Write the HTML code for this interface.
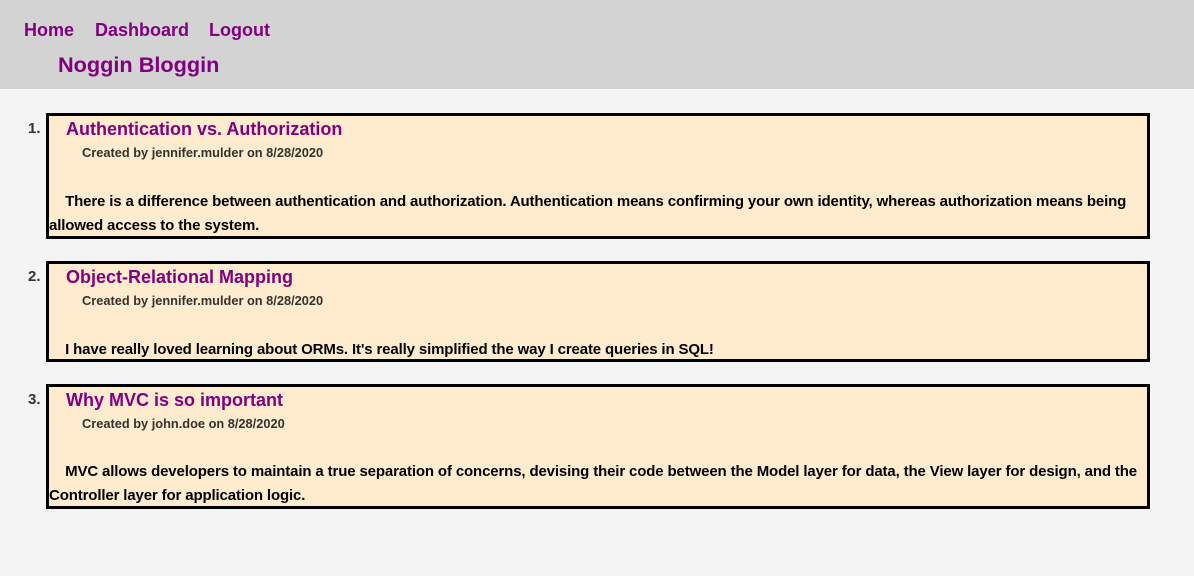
<!DOCTYPE html>
<html><head><meta charset="utf-8"><style>
*{margin:0;padding:0;box-sizing:border-box}
body{width:1194px;height:576px;background:#f4f4f4;font-family:"Liberation Sans",Arial,sans-serif;font-weight:bold;position:relative;overflow:hidden}
header{position:absolute;left:0;top:0;width:1194px;height:89px;background:#d3d3d3}
.nav{position:absolute;top:20px;font-size:18px;color:#800080}
.brand{position:absolute;left:58px;top:52px;font-size:21.7px;color:#800080}
.num{position:absolute;left:28px;font-size:15px;color:#333}
.box{position:absolute;left:46px;width:1104px;background:#ffebcd;border:3px solid #000}
.t{position:absolute;left:17px;top:3px;font-size:18px;color:#800080;white-space:nowrap}
.m{position:absolute;left:33px;top:29px;font-size:12.8px;color:#333;white-space:nowrap}
.p{position:absolute;left:0;font-size:15px;line-height:24px;color:#000;white-space:nowrap;letter-spacing:-0.14px}
</style></head><body>
<header>
<span class="nav" style="left:24px">Home</span>
<span class="nav" style="left:95px">Dashboard</span>
<span class="nav" style="left:209px">Logout</span>
<div class="brand">Noggin Bloggin</div>
</header>

<div class="num" style="top:120px">1.</div>
<div class="box" style="top:113px;height:126px">
<div class="t">Authentication vs. Authorization</div>
<div class="m">Created by jennifer.mulder on 8/28/2020</div>
<div class="p" style="top:74px">&nbsp;&nbsp;&nbsp;&nbsp;There is a difference between authentication and authorization. Authentication means confirming your own identity, whereas authorization means being<br>allowed access to the system.</div>
</div>

<div class="num" style="top:268px">2.</div>
<div class="box" style="top:261px;height:101px">
<div class="t">Object-Relational Mapping</div>
<div class="m">Created by jennifer.mulder on 8/28/2020</div>
<div class="p" style="top:74px">&nbsp;&nbsp;&nbsp;&nbsp;I have really loved learning about ORMs. It's really simplified the way I create queries in SQL!</div>
</div>

<div class="num" style="top:391px">3.</div>
<div class="box" style="top:384px;height:125px">
<div class="t">Why MVC is so important</div>
<div class="m">Created by john.doe on 8/28/2020</div>
<div class="p" style="top:73px">&nbsp;&nbsp;&nbsp;&nbsp;MVC allows developers to maintain a true separation of concerns, devising their code between the Model layer for data, the View layer for design, and the<br>Controller layer for application logic.</div>
</div>
</body></html>
